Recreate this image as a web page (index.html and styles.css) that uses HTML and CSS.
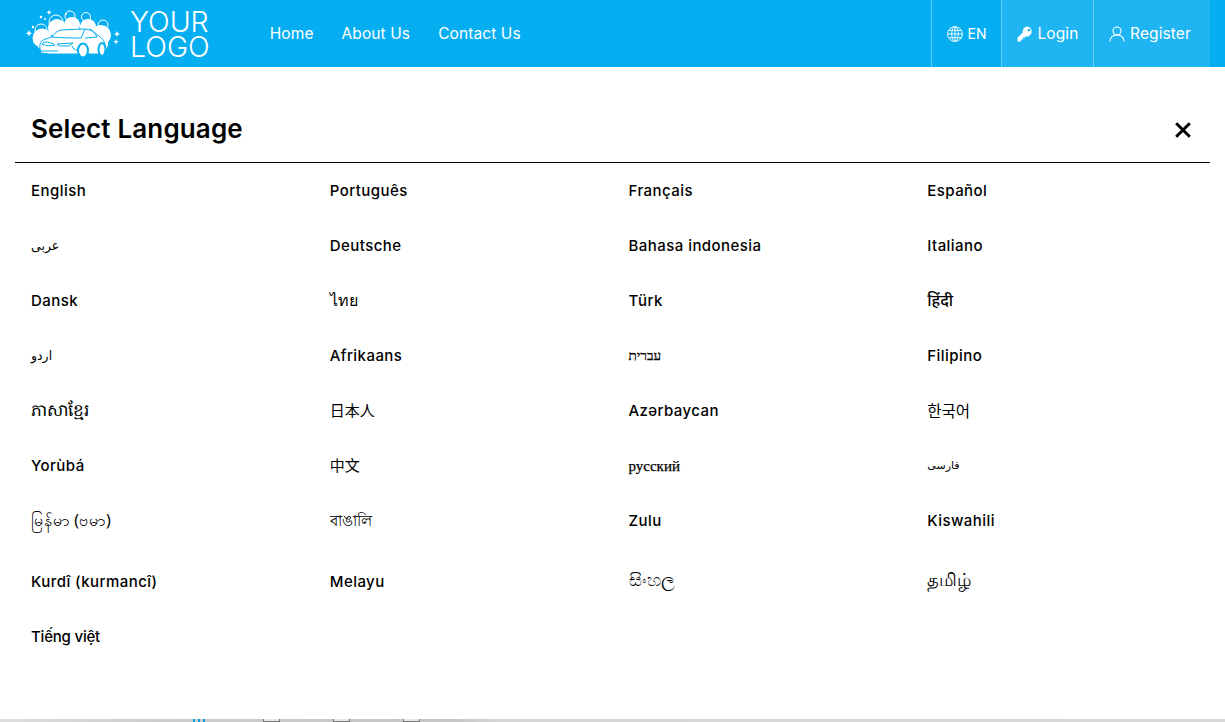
FILE: index.html
```html
<!DOCTYPE html>
<html lang="en">
<head>
<meta charset="utf-8">
<title>Select Language</title>
<link rel="stylesheet" href="styles.css">
</head>
<body>
<header class="topbar">
  <a class="logo" href="#">
    <svg class="logo-mark" viewBox="25 5 96 55" width="96" height="55" aria-hidden="true">
      <g fill="none" stroke="#fff" stroke-width="1">
        <circle cx="70" cy="15" r="5"/><circle cx="86" cy="16" r="4.5"/><circle cx="103" cy="24" r="5"/><circle cx="56" cy="21" r="7"/><circle cx="41" cy="29" r="6"/>
      </g>
      <g fill="#fff">
        <circle cx="42" cy="37" r="9.5"/><circle cx="57" cy="27" r="9"/><circle cx="72" cy="24" r="8"/><circle cx="88" cy="26" r="8"/><circle cx="101" cy="34" r="10"/>
        <path d="M38 36h70v8l-3 8H44l-6-6z"/>
        <circle cx="66" cy="13" r="1"/><circle cx="41" cy="16" r="1.2"/><circle cx="45" cy="18" r="1"/><circle cx="33" cy="26" r="1.2"/>
        <path d="M29 29l1 2.2 2.2 1-2.2 1-1 2.2-1-2.2-2.2-1 2.2-1zM117 30l.9 2.1 2.1.9-2.1.9-.9 2.1-.9-2.1-2.1-.9 2.1-.9zM116 38l.8 2 2 .8-2 .8-.8 2-.8-2-2-.8 2-.8zM49 9l.8 1.600 1.600.8-1.600.8-.8 1.600-.8-1.600-1.600-.8 1.600-.8z"/>
      </g>
      <path d="M41 52c-1-4-2-8 0-11 2-3 8-4 11-5 3-4 5-6 9-7l21-1c6 0 10 1 13 4 4 3 9 6 10 11l1 7-3 3H49z" fill="#fff" stroke="#05aef1" stroke-width="1"/>
      <path d="M52 36c10 1 20 1 29 1l4-9M85 37l12-1c-2-4-4-7-8-8M42 43c5 2 9 2 13 1-2-2-6-3-11-3zM57 43l16-1-4 3H60zM41 50h17M72 45c1 3 3 4 5 4" fill="none" stroke="#05aef1" stroke-width="1"/>
      <ellipse cx="83" cy="49.500" rx="5" ry="7" fill="#fff" stroke="#05aef1" stroke-width="2"/>
      <ellipse cx="102" cy="48.500" rx="3.500" ry="6.500" fill="#fff" stroke="#05aef1" stroke-width="2"/>
    </svg>
    <span class="logo-text">YOUR<br>LOGO</span>
  </a>
  <nav class="nav">
    <a href="#">Home</a>
    <a href="#">About Us</a>
    <a href="#">Contact Us</a>
  </nav>
  <div class="actions">
    <a class="action action-lang" href="#">
      <svg class="icon" viewBox="0 0 16 16" width="16" height="16" fill="none" stroke="#fff" stroke-width="0.900" aria-hidden="true"><circle cx="8" cy="8" r="7.400"/><ellipse cx="8" cy="8" rx="3.300" ry="7.400"/><path d="M8 .6v14.800M.6 8h14.800M1.700 4.300h12.600M1.700 11.700h12.600"/></svg>
      <span>EN</span>
    </a>
    <a class="action action-login" href="#">
      <svg class="icon" viewBox="0 0 16 16" width="16" height="16" fill="#fff" aria-hidden="true"><path d="M10.600.5a4.900 4.900 0 0 0-4.800 6L.5 11.800v3.700h3.500v-2h2v-2h1.700l.9-1a4.900 4.900 0 1 0 2-10zm1.300 2.200a1.400 1.400 0 1 1 0 2.800 1.400 1.400 0 0 1 0-2.800z"/></svg>
      <span>Login</span>
    </a>
    <a class="action action-register" href="#">
      <svg class="icon" viewBox="0 0 16 16" width="16" height="16" fill="none" stroke="#fff" stroke-width="1.100" aria-hidden="true"><circle cx="8" cy="5" r="4"/><path d="M.8 15.500c.4-3.800 3-6.500 7.200-6.500s6.800 2.700 7.200 6.500"/></svg>
      <span>Register</span>
    </a>
  </div>
</header>

<main class="modal">
  <div class="modal-head">
    <h1 class="modal-title">Select Language</h1>
    <button class="close" type="button" aria-label="Close">
      <svg viewBox="0 0 16 16" width="16" height="16" fill="none" stroke="#000" stroke-width="3" aria-hidden="true"><path d="M1.200 1.200l13.600 13.600M14.800 1.200L1.200 14.800"/></svg>
    </button>
  </div>
  <ul class="langs">
    <li>English</li><li>Português</li><li>Français</li><li>Español</li>
    <li class="arabic" lang="ar" dir="ltr">عربى</li><li>Deutsche</li><li>Bahasa indonesia</li><li>Italiano</li>
    <li>Dansk</li><li class="serif thai" lang="th">ไทย</li><li>Türk</li><li class="plain hindi" lang="hi">हिंदी</li>
    <li class="arabic" lang="ur" dir="ltr">اردو</li><li>Afrikaans</li><li class="serif hebrew" lang="he" dir="ltr">עברית</li><li>Filipino</li>
    <li class="plain khmer" lang="km">ភាសាខ្មែរ</li><li class="plain cjk-jp" lang="ja">日本人</li><li>Azərbaycan</li><li class="plain cjk-kr" lang="ko">한국어</li>
    <li>Yorùbá</li><li class="plain cjk-sc" lang="zh">中文</li><li class="serif russian" lang="ru">русский</li><li class="arabic farsi" lang="fa" dir="ltr">فارسی</li>
    <li class="plain tall" lang="my">မြန်မာ (ဗမာ)</li><li class="plain bengali" lang="bn">বাঙালি</li><li>Zulu</li><li>Kiswahili</li>
    <li>Kurdî (kurmancî)</li><li>Melayu</li><li class="plain sinhala" lang="si">සිංහල</li><li class="plain tamil" lang="ta">தமிழ்</li>
    <li class="tight" lang="vi">Tiếng việt</li>
  </ul>
</main>

<div class="peek" aria-hidden="true">
  <span class="peek-icon peek-active"></span>
  <span class="peek-icon"></span>
  <span class="peek-icon"></span>
  <span class="peek-icon"></span>
</div>
</body>
</html>
```
FILE: styles.css
```css
* { box-sizing: border-box; }
html, body { margin: 0; padding: 0; }
body {
  width: 1225px;
  height: 722px;
  overflow: hidden;
  background: #fff;
  color: #000;
  font-family: Inter, "Liberation Sans", sans-serif;
  display: flex;
  flex-direction: column;
}
a { color: inherit; text-decoration: none; }

.topbar {
  flex: 0 0 67px;
  display: flex;
  align-items: stretch;
  background: #05aef1;
  color: #fff;
  padding: 0 15px 0 25px;
}
.logo { display: flex; align-items: center; gap: 10px; }
.logo-mark { display: block; }
.logo-text {
  font-size: 28.500px;
  line-height: 25px;
  font-weight: 350;
  margin-left: -1px;
}
.nav {
  display: flex;
  align-items: center;
  gap: 28px;
  margin-left: 60px;
  font-size: 15.500px;
  letter-spacing: 0.1px;
}
.actions { margin-left: auto; display: flex; align-items: stretch; font-size: 15.500px; letter-spacing: 0.1px; }
.action {
  display: flex;
  align-items: center;
  justify-content: center;
  gap: 5px;
  border-left: 1px solid rgba(255, 255, 255, 0.35);
}
.action-lang { width: 70px; font-size: 14px; letter-spacing: 0; }
.action-login { width: 92px; background: #1fb5f3; }
.action-register { width: 117px; padding-right: 4px; background: #1fb5f3; }
.icon { display: block; flex: none; }

.modal {
  flex: 0 0 652px;
  background: #fff;
  padding: 0 15px;
}
.modal-head {
  height: 96px;
  display: flex;
  align-items: center;
  justify-content: space-between;
  padding: 30px 19px 0 16px;
  border-bottom: 1px solid #000;
}
.modal-title { margin: 0 0 2px; font-size: 26px; line-height: 32px; font-weight: 600; letter-spacing: 0.15px; }
.close { border: 0; padding: 0; background: none; display: block; }
.close svg { display: block; }

.langs {
  list-style: none;
  margin: 0;
  padding: 0;
  display: grid;
  grid-template-columns: repeat(4, 1fr);
  font-size: 15px;
  font-weight: 550;
  letter-spacing: 0.45px;
}
.langs li {
  height: 55px;
  padding: 18px 16px 0;
  line-height: 20px;
  white-space: nowrap;
}
.langs li.tall { height: 61px; }
.langs .tight { letter-spacing: -0.2px; }
.langs .serif { font-family: "Liberation Serif", serif; font-size: 15px; font-weight: 400; letter-spacing: 0; }
.langs .russian { font-size: 15px; -webkit-text-stroke: 0.25px #000; }
.langs .hebrew { font-size: 13.500px; -webkit-text-stroke: 0.25px #000; }
.langs .thai { font-size: 16px; }
.langs .arabic { font-family: "DejaVu Sans", serif; font-size: 12.500px; font-weight: 400; letter-spacing: 0; }
.langs .farsi { font-size: 11px; }
.langs .plain { font-family: "Noto Sans", "DejaVu Sans", serif; font-size: 16px; font-weight: 400; letter-spacing: 0; padding-top: 17px; }
.langs .hindi { font-weight: 500; }
.langs .khmer { font-size: 17px; }
.langs .bengali { font-size: 15px; }
.langs .sinhala { font-size: 17.500px; padding-top: 15px; }
.langs .tamil { font-size: 18.400px; padding-top: 15px; }
.langs .cjk-jp { font-family: "Noto Sans CJK JP", sans-serif; font-size: 15px; }
.langs .cjk-kr { font-family: "Noto Sans CJK KR", sans-serif; font-size: 15.500px; }
.langs .cjk-sc { font-family: "Noto Sans CJK SC", sans-serif; font-size: 15px; }

.peek {
  flex: 1;
  display: flex;
  gap: 53px;
  padding-left: 193px;
  background: linear-gradient(90deg, #dedede 0, #cdcdcd 155px, #c6c6c6 455px, #d6d6d6 500px, #d8d8d8 100%);
}
.peek-icon { width: 17px; height: 3px; background: #e6e6e6; border: 1px solid #777; border-top: 0; }
.peek-active {
  width: 15px;
  margin-right: 2px;
  border: 0;
  background: repeating-linear-gradient(90deg, #05a0dd 0, #05a0dd 2px, transparent 2px, transparent 5px);
}
```
